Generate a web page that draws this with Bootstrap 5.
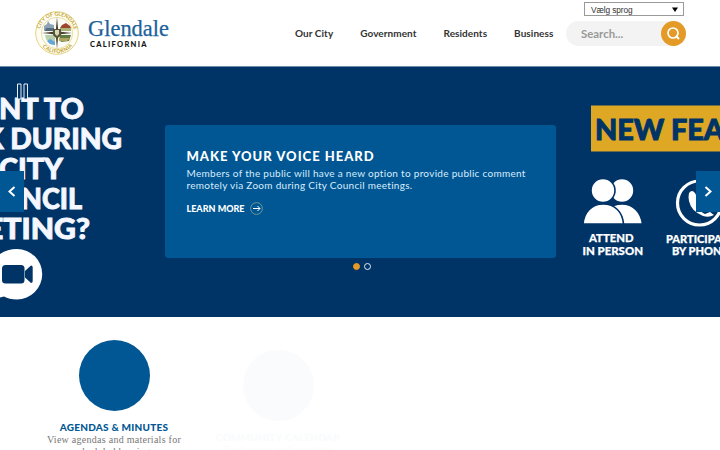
<!DOCTYPE html>
<html lang="en">
  <head>
    <meta charset="UTF-8" />
    <meta name="viewport" content="width=device-width, initial-scale=1.0" />
    <title>Glendale, California</title>
    <link
      href="https://cdn.jsdelivr.net/npm/bootstrap@5.3.0/dist/css/bootstrap.min.css"
      rel="stylesheet"
    />
    <style>
      :root {
        --navy: #003366;
        --blue: #005794;
        --gold: #e39a27;
      }
      html,
      body {
        height: 100%;
        overflow: hidden;
      }
      body {
        font-family: Lato, "Open Sans", sans-serif;
        color: #333;
      }
      svg {
        display: block;
      }
      /* Header */
      .site-header {
        height: 67px;
        padding-left: 34px;
        border-bottom: 1px solid #6f8ca6;
      }
      .brand {
        margin-top: 9px;
        width: 261px;
      }
      .main-nav {
        gap: 27px;
        padding-top: 26px;
        width: 271px;
      }
      .main-nav a {
        color: #333;
        font-size: 10px;
        font-weight: 700;
        line-height: 15px;
        letter-spacing: 0.06px;
        white-space: nowrap;
      }
      .tools {
        width: 120px;
        padding-top: 2px;
      }
      .lang-select {
        width: 100px;
        height: 14px;
        margin-left: 18px;
        padding: 1px 5px 0 6px;
        border: 1px solid #999;
        font: 8px/12px "DejaVu Sans", sans-serif;
        letter-spacing: -0.1px;
      }
      .lang-select span {
        letter-spacing: -0.1px;
        font: 8.3px/12px "Liberation Sans", sans-serif;
      }
      .search-box {
        height: 25px;
        margin-top: 5px;
        padding-left: 15px;
        border-radius: 13px;
        background: #f3f3f3;
        color: #999;
        font-size: 11.4px;
        font-weight: 700;
      }
      .search-btn {
        width: 25px;
        height: 25px;
        border: 0;
        background: var(--gold);
      }
      /* Banner */
      .banner {
        height: 250px;
        background: var(--navy);
      }
      .banner-art {
        top: 0;
        left: 0;
      }
      .voice-card {
        width: 391px;
        height: 133px;
        margin-top: 58px;
        padding: 21px 22px 0 22px;
        border-radius: 3px;
        background: var(--blue);
        color: #fff;
      }
      .voice-card h2 {
        margin: 0;
        font-size: 13px;
        font-weight: 900;
        line-height: 20px;
        letter-spacing: 1px;
      }
      .voice-card p {
        margin: 1px 0 11px;
        font-size: 10px;
        line-height: 12px;
        letter-spacing: 0.29px;
        color: #d9ecfb;
        white-space: nowrap;
      }
      .learn-more {
        gap: 5px;
        color: #fff;
        font-size: 9px;
        font-weight: 900;
        line-height: 13px;
      }
      .slide-dots {
        gap: 4px;
        margin-top: 5px;
        padding-left: 4px;
      }
      .slide-dots span {
        width: 7px;
        height: 7px;
        border: 1px solid #e1effa;
      }
      .slide-dots .on {
        border-color: var(--gold);
        background: var(--gold);
      }
      .arrow-btn {
        top: 104px;
        width: 24px;
        height: 41px;
        border: 0;
        background: var(--blue);
      }
      /* Quick links */
      .quick-links {
        padding: 23px 0 0 32px;
      }
      .quick-link {
        width: 164px;
      }
      .quick-link .disc {
        width: 71px;
        height: 71px;
        background: var(--blue);
      }
      .quick-link h3 {
        margin: 9px 0 0;
        color: var(--blue);
        font-size: 10px;
        font-weight: 900;
        line-height: 14px;
        letter-spacing: 0.25px;
        white-space: nowrap;
      }
      .quick-link p {
        margin: 0;
        color: #777;
        font: 10px/12px "Liberation Serif", serif;
        letter-spacing: 0.27px;
        white-space: nowrap;
      }
      .fading {
        padding-top: 10px;
        opacity: 0.02;
      }
    </style>
  </head>
  <body>
    <header class="site-header d-flex align-items-start bg-white">
      <a class="brand" href="#" aria-label="Glendale California">
        <svg width="140" height="48" viewBox="0 0 140 48">
          <defs>
            <path id="ringTop" d="M5.6 24a17.4 17.4 0 0 1 34.8 0" />
            <path id="ringBottom" d="M2.9 24a20.1 20.1 0 0 0 40.2 0" />
          </defs>
          <circle cx="23" cy="24" r="21.3" fill="#fffdf3" stroke="#e4d382" stroke-width="1" />
          <circle cx="23" cy="24" r="15.7" fill="#fbfbf6" stroke="#e6d78f" stroke-width=".8" />
          <g fill="#c2a22c" font-family="Lato, sans-serif" font-size="5.2" font-weight="700">
            <text><textPath href="#ringTop" startOffset="4" textLength="47">CITY OF GLENDALE</textPath></text>
            <text><textPath href="#ringBottom" startOffset="15" textLength="34">CALIFORNIA</textPath></text>
          </g>
          <path d="M10 22v-5l3-2 1-3 2 3 4 1v6z" fill="#8ea3b5" />
          <path d="M12 19h8v3h-9z" fill="#546b80" />
          <path d="M26 19l2-3 4-2 4 3 1 2z" fill="#9c4630" />
          <path d="M26 19h11v3H26z" fill="#a9b37a" />
          <path d="M11 26h10v10l-5-1-4-5z" fill="#b6cfae" />
          <path d="M13 32l3-2 5 3v3l-5-1z" fill="#62a6dc" />
          <path d="M25 26h12l-2 6-8 1z" fill="#607b42" />
          <path d="M25 29h11l-3 3h-8z" fill="#b1a45e" />
          <path d="M23 8l1.3 14.5L38 24l-13.7 1.5L23 40l-1.3-14.5L8 24l13.7-1.5z" fill="#46402f" />
          <path d="M19 20h8v6l-4 4-4-4z" fill="#5c5534" />
          <path d="M21 21h4v4l-2 2-2-2z" fill="#d5d9bd" />
          <text x="54" y="27" fill="#1c629b" font-family="'Liberation Serif', serif" font-size="22.5" stroke="#1c629b" stroke-width=".25" textLength="81" lengthAdjust="spacingAndGlyphs">Glendale</text>
          <text x="56" y="37.5" fill="#151515" font-family="Lato, sans-serif" font-size="7.5" font-weight="900" textLength="56.5">CALIFORNIA</text>
        </svg>
      </a>
      <nav class="main-nav d-flex">
        <a class="text-decoration-none" href="#">Our City</a>
        <a class="text-decoration-none" href="#">Government</a>
        <a class="text-decoration-none" href="#">Residents</a>
        <a class="text-decoration-none" href="#">Business</a>
      </nav>
      <div class="tools">
        <div class="lang-select d-flex justify-content-between align-items-center bg-white">
          <span>Vælg sprog</span>
          <svg width="6" height="5" viewBox="0 0 6 5"><path d="M0 .5h6L3 5z" fill="#000" /></svg>
        </div>
        <div class="search-box d-flex justify-content-between align-items-center">
          <span>Search...</span>
          <button class="search-btn rounded-circle p-0" aria-label="Search">
            <svg width="25" height="25" viewBox="0 0 25 25" fill="none" stroke="#fff" stroke-width="1.7">
              <circle cx="12" cy="12" r="5" />
              <path d="M14.8 14.8l3.2 3.2" stroke-width="2" />
            </svg>
          </button>
        </div>
      </div>
    </header>

    <section class="banner position-relative overflow-hidden">
      <svg class="banner-art position-absolute" width="720" height="250" viewBox="0 0 720 250" font-family="Lato, sans-serif" font-weight="900">
        <!-- left slide -->
        <g fill="#f4f7ff" stroke="#f4f7ff" stroke-width=".9" font-size="29">
          <text x="-1" y="52" textLength="85" lengthAdjust="spacingAndGlyphs">NT TO</text>
          <text x="-16" y="82" textLength="138" lengthAdjust="spacingAndGlyphs">K DURING</text>
          <text x="-1" y="112" textLength="64" lengthAdjust="spacingAndGlyphs">CITY</text>
          <text x="21" y="142" textLength="61" lengthAdjust="spacingAndGlyphs">NCIL</text>
          <text x="-14" y="172" textLength="104" lengthAdjust="spacingAndGlyphs">ETING?</text>
        </g>
        <path d="M17 182a25.2 25.2 0 1 1 0 50.4q-8 0-13-3l-12 3 3-14V191q9-9 22-9z" fill="#fff" />
        <rect x="2" y="198" width="22.5" height="18.5" rx="3.5" fill="#003366" />
        <path d="M25 204l6-5.5q1.7 0 1.7 2v13.5q0 2-1.7 2l-6-5.500z" fill="#003366" />
        <!-- pause control -->
        <path d="M17.5 17h3.5v15h-3.5zM24 17h3.5v15h-3.5z" fill="#003366" stroke="#e8eef6" />
        <!-- right slide -->
        <path d="M591 38.5h129v46H591z" fill="#dea824" />
        <text x="595" y="73" fill="#003366" stroke="#003366" stroke-width=".9" font-size="28" textLength="129" lengthAdjust="spacingAndGlyphs">NEW FEA</text>
        <g fill="#fff" stroke="#003366" stroke-width="1.6">
          <circle cx="622" cy="123.5" r="12" />
          <path d="M601 157c1-12 10-20 21-20 11 0 19 8 20.5 20z" />
          <circle cx="603" cy="123.500" r="12" />
          <path d="M583 157c1-12 9-20 20-20 12 0 19.5 8 20.5 20z" />
        </g>
        <g fill="#fff" stroke="#fff" stroke-width=".25" font-size="11">
          <text x="589" y="175" textLength="44.5" lengthAdjust="spacingAndGlyphs">ATTEND</text>
          <text x="582.5" y="188" textLength="60.5" lengthAdjust="spacingAndGlyphs">IN PERSON</text>
          <text x="666" y="176" textLength="68" lengthAdjust="spacingAndGlyphs">PARTICIPATE</text>
          <text x="672" y="188" textLength="56" lengthAdjust="spacingAndGlyphs">BY PHONE</text>
        </g>
        <circle cx="699.5" cy="136" r="22" fill="none" stroke="#fff" stroke-width="3.2" />
        <path d="M689 126q3-4 6 0l4 8-2 5q3 6 8 8l5-2 4 3q-5 3-11 1-12-5-14-15-1-4 0-8z" fill="#fff" />
      </svg>
      <div class="voice-card position-relative mx-auto">
        <h2>MAKE YOUR VOICE HEARD</h2>
        <p>Members of the public will have a new option to provide public comment<br />remotely via Zoom during City Council meetings.</p>
        <a class="learn-more d-flex align-items-center text-decoration-none" href="#">
          <span>LEARN MORE</span>
          <svg width="13" height="13" viewBox="0 0 13 13" fill="none" stroke="#fff">
            <circle cx="6.5" cy="6.5" r="5.9" stroke="#8aa58f" stroke-width=".8" />
            <path d="M3 6.5h7M7.5 4L10 6.5 7.5 9" />
          </svg>
        </a>
      </div>
      <div class="slide-dots position-relative d-flex justify-content-center">
        <span class="on rounded-circle"></span>
        <span class="rounded-circle"></span>
      </div>
      <button class="arrow-btn position-absolute start-0 p-0" aria-label="Previous">
        <svg width="24" height="41" fill="none" stroke="#fff" stroke-width="2"><path d="M14.5 16l-5 4.500 5 4.500" /></svg>
      </button>
      <button class="arrow-btn position-absolute end-0 p-0" aria-label="Next">
        <svg width="24" height="41" fill="none" stroke="#fff" stroke-width="2"><path d="M9.5 16l5 4.500-5 4.500" /></svg>
      </button>
    </section>

    <section class="quick-links d-flex text-center">
      <div class="quick-link d-flex flex-column align-items-center">
        <div class="disc rounded-circle"></div>
        <h3>AGENDAS &amp; MINUTES</h3>
        <p>View agendas and materials for<br />scheduled hearings</p>
      </div>
      <div class="quick-link fading d-flex flex-column align-items-center">
        <div class="disc rounded-circle"></div>
        <h3>COMMUNITY CALENDAR</h3>
        <p>Find events and meetings</p>
      </div>
    </section>
    <script src="https://cdn.jsdelivr.net/npm/bootstrap@5.3.0/dist/js/bootstrap.bundle.min.js"></script>
  </body>
</html>
